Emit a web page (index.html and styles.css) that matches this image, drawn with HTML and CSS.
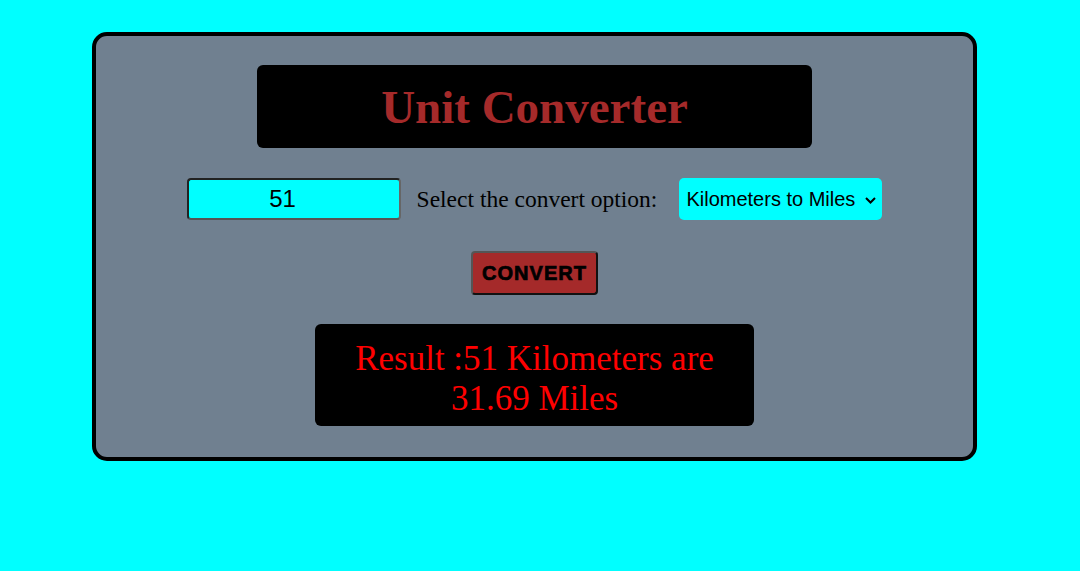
FILE: index.html
```html
<!DOCTYPE html>
<html>
<head>
<meta charset="utf-8">
<link rel="stylesheet" href="styles.css">
</head>
<body>
<div class="card">
  <h1 class="title">Unit Converter</h1>
  <div class="row">
    <input class="num" type="text" value="51">
    <label class="lbl">Select the convert option:</label>
    <select class="opt">
      <option>Kilometers to Miles</option>
    </select>
  </div>
  <button class="btn">CONVERT</button>
  <div class="result">Result :51 Kilometers are 31.69 Miles</div>
</div>
</body>
</html>
```
FILE: styles.css
```css
html, body {
  margin: 0;
  padding: 0;
  background: #00ffff;
}
.card {
  box-sizing: border-box;
  width: 885px;
  margin: 32px 0 0 92px;
  border: 4px solid #000;
  border-radius: 15px;
  background: #708090;
  padding: 29px 0 31px;
  display: flex;
  flex-direction: column;
  align-items: center;
}
.title {
  box-sizing: border-box;
  width: 555px;
  height: 83px;
  margin: 0;
  background: #000;
  border-radius: 6px;
  color: #a52a2a;
  font-family: "Liberation Serif", serif;
  font-weight: bold;
  font-size: 47px;
  display: flex;
  align-items: center;
  justify-content: center;
}
.row {
  margin-top: 30px;
  display: flex;
  align-items: center;
}
.num {
  box-sizing: border-box;
  width: 214px;
  height: 42px;
  background: #00ffff;
  border-style: solid;
  border-width: 2px;
  border-color: #222 #666 #555 #222;
  border-radius: 4px;
  font-family: "Liberation Sans", Arial, sans-serif;
  font-size: 24px;
  text-align: center;
  color: #000;
  padding: 0 22px 0 0;
  outline: none;
}
.lbl {
  margin: 0 22px 0 16px;
  font-family: "Liberation Serif", serif;
  font-size: 23.5px;
  color: #000;
  white-space: nowrap;
}
.opt {
  box-sizing: border-box;
  width: 203px;
  height: 42px;
  -webkit-appearance: none;
  appearance: none;
  background-color: #00ffff;
  background-image: url("data:image/svg+xml;utf8,<svg xmlns='http://www.w3.org/2000/svg' width='11' height='7' viewBox='0 0 11 7'><path d='M1 1 L5.5 5.5 L10 1' fill='none' stroke='black' stroke-width='2'/></svg>");
  background-repeat: no-repeat;
  background-position: 186px 19px;
  border: none;
  border-radius: 5px;
  font-family: "Liberation Sans", Arial, sans-serif;
  font-size: 20px;
  color: #000;
  padding: 0 0 0 7px;
}
.btn {
  box-sizing: border-box;
  margin-top: 31px;
  width: 127px;
  height: 44px;
  background: #a52a2a;
  border-style: solid;
  border-width: 2px;
  border-color: #555 #111 #111 #555;
  border-radius: 4px;
  font-family: "Liberation Sans", Arial, sans-serif;
  font-weight: bold;
  font-size: 20px;
  letter-spacing: 1px;
  -webkit-text-stroke: 0.7px #000;
  color: #000;
  padding: 0;
}
.result {
  box-sizing: border-box;
  margin-top: 29px;
  width: 439px;
  padding: 15px 0 7px;
  background: #000;
  border-radius: 6px;
  color: #ff0000;
  font-family: "Liberation Serif", serif;
  font-size: 35px;
  line-height: 40px;
  text-align: center;
}
```
